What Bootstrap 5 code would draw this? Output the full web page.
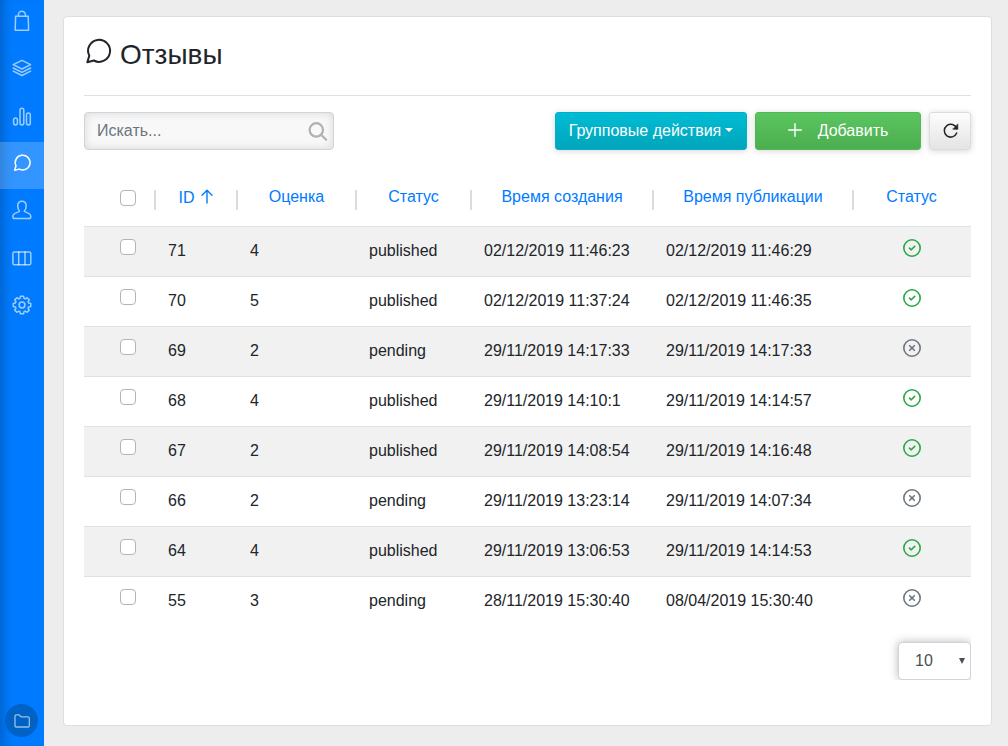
<!DOCTYPE html>
<html lang="ru">
<head>
<meta charset="utf-8">
<meta name="viewport" content="width=device-width, initial-scale=1">
<title>Отзывы</title>
<link href="https://cdn.jsdelivr.net/npm/bootstrap@5.3.0/dist/css/bootstrap.min.css" rel="stylesheet">
<style>
  body { font-family: "Liberation Sans", Arial, sans-serif; font-size: 16px; background: #ededed; color: #212529; height: 746px; overflow: hidden; }
  svg { fill: none; stroke: currentColor; stroke-linecap: round; stroke-linejoin: round; display: block; flex: none; }
  .sidebar { width: 44px; background: #007bff; box-shadow: inset 10px 0 12px -7px rgba(0,0,0,.24); }
  .side-link { height: 47.33px; padding: 9px 0 0 10px; color: rgba(255,255,255,.62); display: block; }
  .side-link svg { width: 24px; height: 24px; stroke-width: 1.5; }
  .side-link.active { background: rgba(255,255,255,.2); color: #fff; }
  .files { width: 33px; height: 33px; margin: 0 0 9px 5px; background: #0062c4; color: rgba(255,255,255,.6); }
  .panel { margin: 16px 16px 20px 19px; padding: 19px 20px 0; border: 1px solid #dedede; border-radius: 4px; }
  .page-title { font-size: 28px; height: 59px; gap: 8px; padding: 3px 0 0 0; line-height: 32px; font-weight: 400; }
  .rule { height: 1px; background: #e1e1e1; margin-bottom: 16px; }
  .search { width: 250px; }
  .search .form-control { height: 38px; background: #f8f8f8; border-color: #ced4da; border-radius: 4px; box-shadow: inset 0 0 10px rgba(0,0,0,.13); }
  .search .form-control::placeholder { color: #6c757d; }
  .search svg { position: absolute; right: 6px; top: 9px; color: #b1b1b1; }
  .btn { height: 38px; border-radius: 3px; padding: 6px 12px; box-shadow: 0 1px 6px rgba(0,0,0,.16); white-space: nowrap; }
  .btn-group-act { width: 192px; color: #fff; border: 1px solid #00afc9; background: linear-gradient(#00bcd4, #00a5bb); }
  .btn-add { width: 166px; color: #fff; border: 1px solid #52b755; background: linear-gradient(#5ac55e, #4cae50); }
  .btn-refresh { width: 42px; border: 1px solid #dcdcdc; background: linear-gradient(#fdfdfd, #e4e4e4); }
  .reviews { margin-top: 17px; table-layout: fixed; width: 887px; --bs-table-striped-bg: #f1f1f1; --bs-table-color: #212529; --bs-table-striped-color: #212529; --bs-table-bg: #fff; }
  .reviews > thead th { height: 59px; padding: 0; border: 0; vertical-align: top; font-weight: 400; color: #007bff; text-align: center; }
  .head-cell { height: 20px; margin-top: 23px; border-right: 2px solid #dcdcdc; line-height: 13px; }
  th:last-child .head-cell { border-color: transparent; }
  .reviews > tbody td { height: 50px; padding: 12px 0 0 12px; line-height: 24px; border: 0; border-top: 1px solid #dee2e6; vertical-align: top; }
  .reviews > tbody td:first-child { padding-left: 36px; }
  .tick { display: block; width: 16px; height: 16px; margin: 0; border: 1px solid #adb5bd; border-radius: 4px; background: #fff; appearance: none; }
  .reviews td svg { margin: -1px 0 0 36px; }
  .pager { width: 73px; height: 38px; margin-top: 16px; padding: 0 5px 0 16px; border: 1px solid #ced4da; border-radius: 4px; color: #495057; box-shadow: 0 0 10px rgba(0,0,0,.28); clip-path: inset(-20px 0 0 -20px); }
  .caret-down { border: 3px solid transparent; border-top: 6px solid #495057; border-bottom: 0; }
</style>
</head>
<body class="d-flex">
<svg width="0" height="0" class="position-absolute">
  <symbol id="chat" viewBox="0 0 24 24"><path d="M4.7 19.3 6 14.8A7.4 7.4 0 1 1 9.2 18.1Z"/></symbol>
  <symbol id="ok" viewBox="0 0 20 20"><circle cx="10" cy="10" r="8.2"/><path d="m7.5 10.1 1.8 1.7 3.4-3.4"/></symbol>
  <symbol id="no" viewBox="0 0 20 20"><circle cx="10" cy="10" r="8.2"/><path d="m7.7 7.7 4.6 4.6m0-4.6-4.6 4.6"/></symbol>
</svg>
<nav class="sidebar d-flex flex-column flex-shrink-0">
  <a class="side-link" href="#"><svg viewBox="0 0 24 24"><path d="M5.6 7.2h12.6l.4 14H5.2ZM8.4 7V5.7a3.5 3.5 0 0 1 7 0V7"/></svg></a>
  <a class="side-link" href="#"><svg viewBox="0 0 24 24"><path d="m12 4.4 8.6 4.3L12 13 3.200 8.700ZM3.200 12 12 16.300 20.600 12M3.200 15.200 12 19.500 20.600 15.200"/></svg></a>
  <a class="side-link" href="#"><svg viewBox="0 0 24 24"><rect x="3.6" y="14" width="3.8" height="7" rx="1.9"/><rect x="10" y="4.2" width="3.8" height="16.800" rx="1.9"/><rect x="16.500" y="9" width="3.8" height="12" rx="1.9"/></svg></a>
  <a class="side-link active" href="#"><svg><use href="#chat"/></svg></a>
  <a class="side-link" href="#"><svg viewBox="0 0 24 24"><path d="M12 3.200C9.200 3.200 7.700 5 7.700 8c0 2.500.8 4 1.900 5.200-1 1.500-6.800 1.200-6.800 5.200 0 1.400.7 2.200 2 2.200h14c1.300 0 2-.8 2-2.200 0-4-5.600-3.700-6.600-5.200C15.300 12 16.200 10.500 16.200 8c0-3-1.500-4.800-4.200-4.800Z"/></svg></a>
  <a class="side-link" href="#"><svg viewBox="0 0 24 24"><rect x="2.900" y="5.900" width="17.900" height="12.900" rx="1.500"/><path d="M8.700 6v12.700M15 6v12.700"/></svg></a>
  <a class="side-link" href="#"><svg viewBox="0 0 24 24"><circle cx="12" cy="12" r="2.900"/><path d="M10.450 3.240h3.100L14.020 5.400 15.240 5.910 17.100 4.710 19.290 6.900 18.090 8.760 18.600 9.980 20.760 10.450V13.550L18.600 14.020 18.090 15.240 19.290 17.100 17.100 19.290 15.240 18.090 14.020 18.600 13.550 20.760H10.450L9.980 18.600 8.760 18.090 6.900 19.290 4.710 17.100 5.910 15.240 5.400 14.020 3.240 13.550V10.450L5.400 9.980 5.910 8.760 4.710 6.900 6.900 4.710 8.760 5.910 9.980 5.400Z"/></svg></a>
  <a class="files rounded-circle mt-auto d-flex align-items-center justify-content-center" href="#"><svg width="18" height="18" viewBox="0 0 18 18" stroke-width="1.3"><path d="M2 4.200q0-1.300 1.300-1.300h3l1.700 2h7q1.300 0 1.300 1.300v7.600q0 1.200-1.300 1.200H3.300Q2 15 2 13.800Z"/></svg></a>
</nav>
<main class="panel bg-white flex-grow-1">
  <h1 class="page-title d-flex m-0"><svg width="28" height="32" viewBox="1 0 28 32" stroke-width="2" style="margin-top:-3px"><path d="M4.300 26.200 6.300 19.800A11 11 0 1 1 10.900 24.500Z"/></svg><span>Отзывы</span></h1>
  <div class="rule"></div>
  <div class="d-flex gap-2">
    <div class="search position-relative me-auto">
      <input class="form-control" type="text" placeholder="Искать...">
      <svg width="20" height="20" viewBox="0 0 20 20" stroke-width="2.200"><circle cx="8.300" cy="8.900" r="6.700"/><path d="m13.200 13.800 4.900 4.900"/></svg>
    </div>
    <button class="btn btn-group-act dropdown-toggle" type="button">Групповые действия</button>
    <button class="btn btn-add d-flex align-items-center justify-content-center" type="button"><svg class="me-3" width="14" height="14" viewBox="0 0 14 14" stroke-width="1.400" style="margin-top:-2px"><path d="M7 .7v12.600M.7 7h12.600"/></svg>Добавить</button>
    <button class="btn btn-refresh" type="button"><svg width="18" height="18" viewBox="0 0 18 18" stroke-width="1.500" style="margin-top:-1px"><path d="M14.700 11A6.400 6.400 0 1 1 14.700 6.400"/><path fill="currentColor" stroke-width=".6" d="m15.800 2.300.1 5-4.900-.1Z"/></svg></button>
  </div>
  <table class="table table-striped reviews mb-0">
    <colgroup><col style="width:72px"><col style="width:82px"><col style="width:119px"><col style="width:115px"><col style="width:182px"><col style="width:200px"><col style="width:117px"></colgroup>
    <thead><tr>
      <th><div class="head-cell"><input class="tick" type="checkbox" style="margin-left:36px"></div></th>
      <th><div class="head-cell d-flex justify-content-center" style="line-height:15px">ID<svg width="14" height="16" viewBox="0 0 14 16" stroke-width="1.400" style="margin:-1px 0 0 5px"><path d="M7 14V1.500M2 6.300l5-5 5 5"/></svg></div></th>
      <th><div class="head-cell">Оценка</div></th>
      <th><div class="head-cell">Статус</div></th>
      <th><div class="head-cell">Время создания</div></th>
      <th><div class="head-cell">Время публикации</div></th>
      <th><div class="head-cell">Статус</div></th>
    </tr></thead>
    <tbody>
      <tr><td><input class="tick" type="checkbox"></td><td>71</td><td>4</td><td>published</td><td>02/12/2019 11:46:23</td><td>02/12/2019 11:46:29</td><td><svg class="on" width="20" height="20"><use href="#ok"/></svg></td></tr>
      <tr><td><input class="tick" type="checkbox"></td><td>70</td><td>5</td><td>published</td><td>02/12/2019 11:37:24</td><td>02/12/2019 11:46:35</td><td><svg class="on" width="20" height="20"><use href="#ok"/></svg></td></tr>
      <tr><td><input class="tick" type="checkbox"></td><td>69</td><td>2</td><td>pending</td><td>29/11/2019 14:17:33</td><td>29/11/2019 14:17:33</td><td><svg class="off" width="20" height="20"><use href="#no"/></svg></td></tr>
      <tr><td><input class="tick" type="checkbox"></td><td>68</td><td>4</td><td>published</td><td>29/11/2019 14:10:1</td><td>29/11/2019 14:14:57</td><td><svg class="on" width="20" height="20"><use href="#ok"/></svg></td></tr>
      <tr><td><input class="tick" type="checkbox"></td><td>67</td><td>2</td><td>published</td><td>29/11/2019 14:08:54</td><td>29/11/2019 14:16:48</td><td><svg class="on" width="20" height="20"><use href="#ok"/></svg></td></tr>
      <tr><td><input class="tick" type="checkbox"></td><td>66</td><td>2</td><td>pending</td><td>29/11/2019 13:23:14</td><td>29/11/2019 14:07:34</td><td><svg class="off" width="20" height="20"><use href="#no"/></svg></td></tr>
      <tr><td><input class="tick" type="checkbox"></td><td>64</td><td>4</td><td>published</td><td>29/11/2019 13:06:53</td><td>29/11/2019 14:14:53</td><td><svg class="on" width="20" height="20"><use href="#ok"/></svg></td></tr>
      <tr><td><input class="tick" type="checkbox"></td><td>55</td><td>3</td><td>pending</td><td>28/11/2019 15:30:40</td><td>08/04/2019 15:30:40</td><td><svg class="off" width="20" height="20"><use href="#no"/></svg></td></tr>
    </tbody>
  </table>
  <div class="pager ms-auto bg-white d-flex align-items-center justify-content-between" role="button"><span>10</span><i class="caret-down"></i></div>
</main>
<style>
  td .on { color: #28a745; stroke-width: 1.6; }
  td .off { color: #6c757d; stroke-width: 1.6; }
</style>
<script src="https://cdn.jsdelivr.net/npm/bootstrap@5.3.0/dist/js/bootstrap.bundle.min.js"></script>
</body>
</html>
